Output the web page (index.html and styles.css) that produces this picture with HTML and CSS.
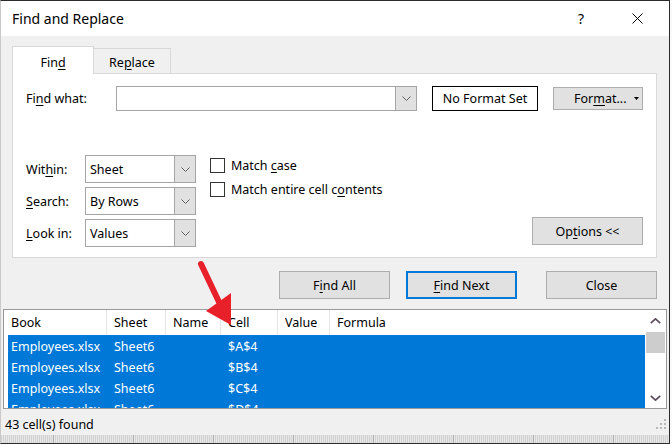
FILE: index.html
```html
<!DOCTYPE html>
<html lang="en">
<head>
  <meta charset="UTF-8">
  <title>Find and Replace</title>
  <link rel="stylesheet" href="styles.css">
</head>
<body>
  <div class="dialog">
    <div class="titlebar">
      <span class="title">Find and Replace</span>
      <span class="help">?</span>
      <span class="close">
        <svg width="11" height="11" viewBox="0 0 11 11"><path d="M0.5 0.5 L10.5 10.5 M10.5 0.5 L0.5 10.5" stroke="#000" stroke-width="1"/></svg>
      </span>
    </div>

    <div class="content">
      <div class="tabs">
        <div class="tab active"><span>Fin<u>d</u></span></div>
        <div class="tab"><span>Re<u>p</u>lace</span></div>
      </div>

      <div class="panel">
        <div class="find-row">
          <span class="find-label">Fi<u>n</u>d what:</span>
          <div class="combo combo-wide">
            <span class="combo-btn">
              <svg width="9" height="5" viewBox="0 0 9 5"><polyline points="0.5,0.5 4.5,4.5 8.5,0.5" fill="none" stroke="#606060"/></svg>
            </span>
          </div>
          <div class="format-box">No Format Set</div>
          <div class="btn format-btn"><span>For<u>m</u>at...</span>
            <svg class="caret" width="5" height="3" viewBox="0 0 5 3"><polygon points="0,0 5,0 2.5,3" fill="#000"/></svg>
          </div>
        </div>

        <div class="options">
          <div class="fields">
            <span>Wit<u>h</u>in:</span>
            <div class="combo combo-select">
              <span class="combo-text">Sheet</span>
              <span class="combo-btn">
                <svg width="9" height="5" viewBox="0 0 9 5"><polyline points="0.5,0.5 4.5,4.5 8.5,0.5" fill="none" stroke="#606060"/></svg>
              </span>
            </div>
            <span><u>S</u>earch:</span>
            <div class="combo combo-select">
              <span class="combo-text">By Rows</span>
              <span class="combo-btn">
                <svg width="9" height="5" viewBox="0 0 9 5"><polyline points="0.5,0.5 4.5,4.5 8.5,0.5" fill="none" stroke="#606060"/></svg>
              </span>
            </div>
            <span><u>L</u>ook in:</span>
            <div class="combo combo-select">
              <span class="combo-text">Values</span>
              <span class="combo-btn">
                <svg width="9" height="5" viewBox="0 0 9 5"><polyline points="0.5,0.5 4.5,4.5 8.5,0.5" fill="none" stroke="#606060"/></svg>
              </span>
            </div>
          </div>

          <div class="checks">
            <div class="check"><span class="box"></span><span>Match <u>c</u>ase</span></div>
            <div class="check"><span class="box"></span><span>Match entire cell c<u>o</u>ntents</span></div>
          </div>

          <div class="btn options-btn"><span>Op<u>t</u>ions &lt;&lt;</span></div>
        </div>
      </div>

      <div class="actions">
        <div class="btn action"><span>F<u>i</u>nd All</span></div>
        <div class="btn action primary"><span><u>F</u>ind Next</span></div>
        <div class="btn action close-btn">Close</div>
      </div>
    </div>

    <div class="results">
      <div class="table">
        <div class="thead">
          <span class="th">Book</span>
          <span class="th">Sheet</span>
          <span class="th">Name</span>
          <span class="th">Cell</span>
          <span class="th">Value</span>
          <span class="th last">Formula</span>
        </div>
        <div class="tbody">
          <div class="tr"><span>Employees.xlsx</span><span>Sheet6</span><span></span><span>$A$4</span><span></span><span></span></div>
          <div class="tr"><span>Employees.xlsx</span><span>Sheet6</span><span></span><span>$B$4</span><span></span><span></span></div>
          <div class="tr"><span>Employees.xlsx</span><span>Sheet6</span><span></span><span>$C$4</span><span></span><span></span></div>
          <div class="tr"><span>Employees.xlsx</span><span>Sheet6</span><span></span><span>$D$4</span><span></span><span></span></div>
        </div>
      </div>
      <div class="scrollbar">
        <span class="scroll-arrow up">
          <svg width="11" height="6" viewBox="0 0 11 6"><polyline points="0.8,5.2 5.5,0.8 10.2,5.2" fill="none" stroke="#5b4b5b" stroke-width="1.6"/></svg>
        </span>
        <span class="thumb"></span>
        <span class="scroll-arrow down">
          <svg width="11" height="6" viewBox="0 0 11 6"><polyline points="0.8,0.8 5.5,5.2 10.2,0.8" fill="none" stroke="#5b4b5b" stroke-width="1.6"/></svg>
        </span>
      </div>
    </div>

    <div class="status">
      <span>43 cell(s) found</span>
      <svg class="grip" width="10" height="10" viewBox="0 0 10 10">
        <rect x="8" y="0" width="2" height="2" fill="#b8b8b8"/>
        <rect x="4" y="4" width="2" height="2" fill="#b8b8b8"/>
        <rect x="8" y="4" width="2" height="2" fill="#b8b8b8"/>
        <rect x="0" y="8" width="2" height="2" fill="#b8b8b8"/>
        <rect x="4" y="8" width="2" height="2" fill="#b8b8b8"/>
        <rect x="8" y="8" width="2" height="2" fill="#b8b8b8"/>
      </svg>
    </div>
    <div class="band"></div>
  </div>

  <svg class="arrow" width="672" height="444" viewBox="0 0 672 444">
    <line x1="201" y1="264" x2="219" y2="302" stroke="#e8202a" stroke-width="6" stroke-linecap="round"/>
    <polygon points="206,311 231,293 231,325" fill="#e8202a"/>
  </svg>
</body>
</html>
```

FILE: styles.css
```css
* {
  box-sizing: border-box;
}

body {
  margin: 0;
  width: 672px;
  height: 444px;
  overflow: hidden;
  position: relative;
  background: #fafafa;
  font-family: "Noto Sans", sans-serif;
  font-size: 12.5px;
  color: #000;
}

u {
  text-decoration: underline;
  text-underline-offset: 2px;
}

.dialog {
  width: 670px;
  height: 444px;
  display: flex;
  flex-direction: column;
  background: #f0f0f0;
  border-top: 1px solid #2b2b2b;
  border-right: 1px solid #2b2b2b;
  border-bottom: 1px solid #2b2b2b;
  border-left: 1px solid #c9c9c9;
}

/* title bar */

.titlebar {
  height: 35px;
  flex-shrink: 0;
  display: flex;
  align-items: center;
  background: #fff;
}

.title {
  padding-left: 11px;
  font-size: 14px;
}

.help {
  margin-left: auto;
  width: 46px;
  margin-right: 10px;
  text-align: center;
  font-size: 14px;
}

.close {
  width: 46px;
  margin-right: 9px;
  display: flex;
  justify-content: center;
}

/* tabs + panel */

.content {
  padding: 10px 12px 0 11px;
}

.tabs {
  position: relative;
  z-index: 1;
  height: 28px;
  margin-bottom: -1px;
  display: flex;
  align-items: flex-end;
}

.tab {
  display: flex;
  align-items: center;
  justify-content: center;
}

.tab.active {
  width: 82px;
  height: 28px;
  padding-top: 3px;
  background: #fff;
  border: 1px solid #d9d9d9;
  border-bottom: none;
}

.tab + .tab {
  width: 77px;
  height: 26px;
  padding-top: 2px;
  background: #f0f0f0;
  border: 1px solid #d9d9d9;
  border-left: none;
}

.panel {
  background: #fff;
  border: 1px solid #d9d9d9;
  padding: 12px 13px 10px 13px;
}

.find-row {
  height: 25px;
  display: flex;
  align-items: center;
}

.find-label {
  width: 90px;
}

.combo {
  display: flex;
  align-items: center;
  background: #fff;
  border: 1px solid #a5a5a5;
}

.combo-wide {
  width: 301px;
  height: 25px;
}

.combo-select {
  width: 111px;
  height: 28px;
}

.combo-text {
  padding-left: 4px;
}

.combo-btn {
  margin-left: auto;
  width: 21px;
  height: 100%;
  display: flex;
  align-items: center;
  justify-content: center;
  background: #e1e1e1;
  border-left: 1px solid #a5a5a5;
}

.format-box {
  margin-left: 15px;
  width: 106px;
  height: 25px;
  display: flex;
  align-items: center;
  justify-content: center;
  border: 1px solid #000;
}

.btn {
  display: flex;
  align-items: center;
  justify-content: center;
  background: #e1e1e1;
  border: 1px solid #adadad;
}

.format-btn {
  margin-left: 15px;
  width: 90px;
  height: 23px;
  justify-content: flex-start;
  padding: 0 3px 0 20px;
}

.caret {
  margin-left: auto;
}

.options {
  margin-top: 44px;
  display: flex;
}

.fields {
  display: grid;
  grid-template-columns: 59px 111px;
  row-gap: 4px;
  align-items: center;
}

.checks {
  margin-left: 14px;
  padding-top: 3px;
  display: flex;
  flex-direction: column;
  gap: 9px;
}

.check {
  height: 15px;
  display: flex;
  align-items: center;
  gap: 6px;
}

.box {
  width: 15px;
  height: 15px;
  background: #fff;
  border: 1px solid #333;
}

.options-btn {
  margin-left: auto;
  margin-bottom: 2px;
  align-self: flex-end;
  width: 111px;
  height: 28px;
}

/* action buttons */

.actions {
  margin-top: 13px;
  display: flex;
  justify-content: flex-end;
  gap: 16px;
}

.action {
  width: 111px;
  height: 28px;
}

.primary {
  border: 2px solid #0078d7;
}

.close-btn {
  margin-left: 13px;
}

/* results list */

.results {
  margin: 10px 2px 0 2px;
  height: 100px;
  flex-shrink: 0;
  display: flex;
  background: #fff;
  border: 1px solid #999;
}

.table {
  flex: 1;
  display: flex;
  flex-direction: column;
  overflow: hidden;
}

.thead {
  height: 25px;
  flex-shrink: 0;
  display: grid;
  grid-template-columns: 103px 59px 55px 57px 52px 1fr;
}

.th {
  display: flex;
  align-items: center;
  padding-left: 7px;
  border-right: 1px solid #e5e5e5;
}

.th.last {
  border-right: none;
}

.tbody {
  flex: 1;
  margin-left: 4px;
  overflow: hidden;
  background: #0078d7;
  color: #fff;
}

.tr {
  height: 21px;
  padding-top: 2px;
  display: grid;
  grid-template-columns: 99px 59px 55px 57px 52px 1fr;
  align-items: center;
}

.tr span {
  padding-left: 7px;
  white-space: nowrap;
}

.tr span:first-child {
  padding-left: 3px;
}

.scrollbar {
  width: 21px;
  display: flex;
  flex-direction: column;
  background: #fff;
}

.scroll-arrow {
  height: 22px;
  display: flex;
  align-items: center;
  justify-content: center;
}

.scroll-arrow.down {
  margin-top: auto;
  height: 21px;
}

.thumb {
  height: 21px;
  margin: 0 1px;
  background: #cdcdcd;
}

/* status bar */

.status {
  height: 26px;
  flex-shrink: 0;
  display: flex;
  align-items: center;
  padding: 4px 3px 0 4px;
}

.grip {
  margin-left: auto;
}

.band {
  flex: 1;
  background:
    repeating-linear-gradient(90deg, transparent 0 52px, #b4b4b4 52px 53px, transparent 53px 80px),
    repeating-linear-gradient(90deg, #d2d2d2 0 1px, #e6e6e6 1px 2px);
}

.arrow {
  position: absolute;
  top: 0;
  left: 0;
  pointer-events: none;
}
```
